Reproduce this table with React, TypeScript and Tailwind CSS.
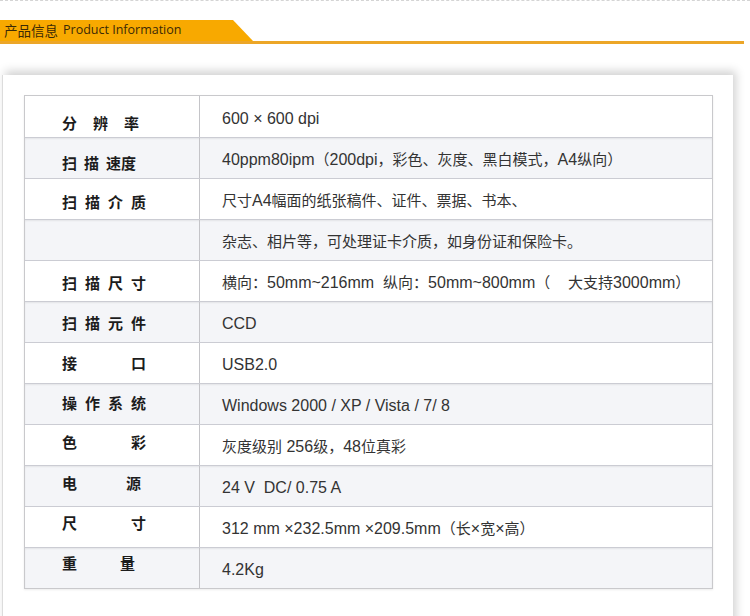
const cjk = "font-['Liberation_Sans','Noto_Sans_CJK_SC',sans-serif]";

type Row = {
  label: string[];
  w: string;
  pt: string;
  value: string;
};

const rows: Row[] = [
  { label: ["分", "辨", "率"], w: "w-[77px]", pt: "pt-[17px]", value: "600 × 600 dpi" },
  { label: ["扫", "描", "速度"], w: "w-[74px]", pt: "pt-[15px]", value: "40ppm80ipm（200dpi，彩色、灰度、黑白模式，A4纵向）" },
  { label: ["扫", "描", "介", "质"], w: "w-[84px]", pt: "pt-[13px]", value: "尺寸A4幅面的纸张稿件、证件、票据、书本、" },
  { label: [], w: "w-[84px]", pt: "pt-[12px]", value: "杂志、相片等，可处理证卡介质，如身份证和保险卡。" },
  { label: ["扫", "描", "尺", "寸"], w: "w-[84px]", pt: "pt-[12px]", value: "横向：50mm~216mm  纵向：50mm~800mm（    大支持3000mm）" },
  { label: ["扫", "描", "元", "件"], w: "w-[84px]", pt: "pt-[11px]", value: "CCD" },
  { label: ["接", "口"], w: "w-[84px]", pt: "pt-[10px]", value: "USB2.0" },
  { label: ["操", "作", "系", "统"], w: "w-[84px]", pt: "pt-[9px]", value: "Windows 2000 / XP / Vista / 7/ 8" },
  { label: ["色", "彩"], w: "w-[84px]", pt: "pt-[7px]", value: "灰度级别 256级，48位真彩" },
  { label: ["电", "源"], w: "w-[79px]", pt: "pt-[7px]", value: "24 V  DC/ 0.75 A" },
  { label: ["尺", "寸"], w: "w-[84px]", pt: "pt-[6px]", value: "312 mm ×232.5mm ×209.5mm（长×宽×高）" },
  { label: ["重", "量"], w: "w-[73px]", pt: "pt-[5px]", value: "4.2Kg" },
];

// latin runs are set a touch larger than the CJK ones, like the original
function Value({ text }: { text: string }) {
  const parts = text.split(/([\u3000-\u303f\u4e00-\u9fff\uff00-\uffef]+)/).filter(Boolean);
  return (
    <>
      {parts.map((p, i) =>
        /[\u3000-\u303f\u4e00-\u9fff\uff00-\uffef]/.test(p) ? (
          <span key={i} className="text-[15px]">
            {p}
          </span>
        ) : (
          <span key={i} className="text-[16px]">
            {p}
          </span>
        ),
      )}
    </>
  );
}

export default function App() {
  return (
    <div className={`w-[750px] h-[616px] overflow-hidden bg-white ${cjk}`}>
      <div className="h-0 border-t border-dashed border-[#d4d4d4]" />

      {/* section heading */}
      <div className="pt-[19px]">
        <div className="flex h-[21px] w-[253px] items-center bg-[#f8a900] pl-[4px] [clip-path:polygon(0_0,233px_0,253px_100%,0_100%)]">
          <span className="font-['Noto_Sans_CJK_SC',sans-serif] text-[13.5px] leading-none text-[#3b2a06]">产品信息</span>
          <span className="ml-[5px] font-['Open_Sans','Noto_Sans',sans-serif] text-[12.5px] leading-none text-[#3b2a06]">
            Product Information
          </span>
        </div>
        <div className="h-[3px] w-[744px] bg-[#eca628]" />
      </div>

      {/* card */}
      <div className="mt-[31px] ml-[2px] w-[731px] border-l border-[#dcdcdc] bg-white pl-[21px] pr-[20px] pt-[20px] pb-[40px] shadow-[3px_-4px_9px_rgba(0,0,0,0.18)]">
        <div className="border border-[#c9c9cc] shadow-[0_1px_2px_rgba(0,0,0,0.08)]">
          {rows.map((r, i) => {
            const gray = i % 2 === 1;
            return (
              <div
                key={i}
                className={`flex h-[41px] ${i > 0 ? "border-t border-[#cbccd3]" : ""} ${
                  gray ? "bg-[#f4f5f8] shadow-[inset_0_1px_2px_rgba(0,0,0,0.07)]" : "bg-white"
                }`}
              >
                <div className={`w-[175px] shrink-0 border-r border-[#c4c4c8] pl-[37px] ${r.pt}`}>
                  <div
                    className={`flex ${r.w} justify-between font-['Noto_Sans_CJK_SC',sans-serif] text-[15px] font-bold leading-[20px] text-[#1c1c1c]`}
                  >
                    {r.label.map((c) => (
                      <span key={c}>{c}</span>
                    ))}
                  </div>
                </div>
                <div
                  className={`pl-[22px] ${i === 0 ? "pt-[13px]" : "pt-[12px]"} whitespace-pre leading-[20px] text-[#333333]`}
                >
                  <Value text={r.value} />
                </div>
              </div>
            );
          })}
        </div>
      </div>
    </div>
  );
}
